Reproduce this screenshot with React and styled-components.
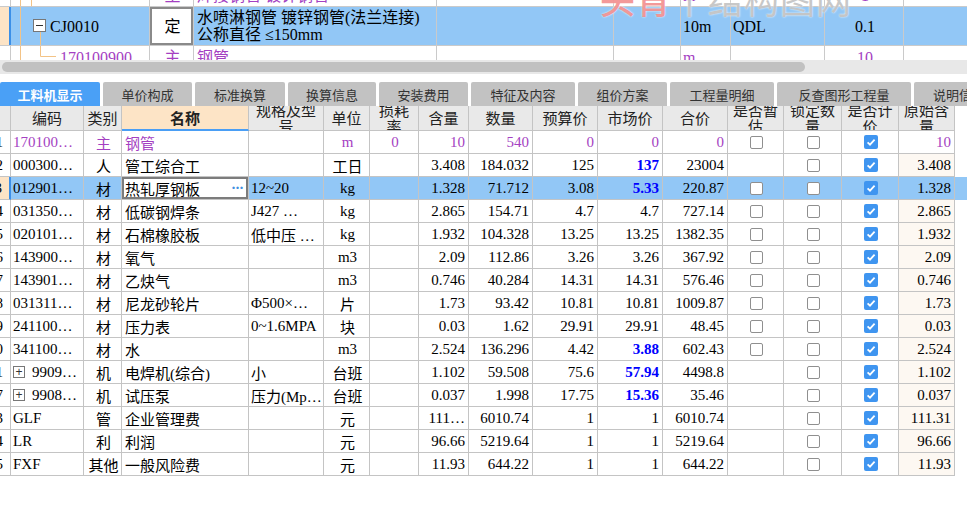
import React from "react";
import styled, { createGlobalStyle } from "styled-components";

const SONG = `"Liberation Serif", "Noto Sans CJK SC", serif`;
const HEI = `"Noto Sans CJK SC", "Liberation Sans", sans-serif`;
const PURPLE = "#a43fc2";
const SEL = "#92c7f6";
const PEACH = "#fde4c6";
const LINE = "#c4c4c4";

const GlobalStyle = createGlobalStyle`
  html, body { margin: 0; padding: 0; background: #fff; }
  #root { width: 967px; height: 512px; }
`;

const justify = (a) =>
  a === "center" ? "center" : a === "right" ? "flex-end" : "flex-start";

const Page = styled.div`
  position: relative;
  width: 967px;
  height: 512px;
  overflow: hidden;
  background: #fff;
  font-family: ${SONG};
`;

const Watermark = styled.div`
  position: absolute;
  left: 600px;
  top: -19px;
  font-family: ${HEI};
  font-size: 35px;
  line-height: 35px;
  letter-spacing: 1px;
  color: rgba(190, 190, 190, 0.85);
  text-shadow: 0 0 2px #fff;
  white-space: nowrap;
  pointer-events: none;
  & b {
    font-weight: 500;
    color: rgba(240, 120, 120, 0.75);
  }
`;

/* upper grid (quota rows) */
const UpperView = styled.div`
  height: 60px;
  overflow: hidden;
`;
const UpperTrack = styled.div`
  margin: -16px 0 0 -20px;
`;
const URow = styled.div`
  display: flex;
  height: ${(p) => p.$h}px;
  box-sizing: border-box;
  border-bottom: 1px solid #cacaca;
  background: ${(p) => (p.$sel ? SEL : "#fff")};
`;
const UCell = styled.div`
  flex: none;
  position: relative;
  box-sizing: border-box;
  width: ${(p) => p.$w}px;
  border-right: 1px solid #cacaca;
  display: flex;
  align-items: center;
  justify-content: ${(p) => justify(p.$align)};
  padding: 0 0 0 ${(p) => p.$pl ?? 2}px;
  font-size: 16px;
  line-height: 17px;
  color: ${(p) => (p.$purple ? PURPLE : "#000")};
  white-space: nowrap;
  overflow: hidden;
`;
const UNoCell = styled(UCell)`
  background: ${(p) => (p.$sel ? PEACH : "#fff")};
  border-right: ${(p) => (p.$sel ? "2px solid #3b8fe8" : "1px solid #cacaca")};
`;
const DingCell = styled(UCell)`
  background: #fff;
  box-shadow: inset 0 0 0 2px #8a8a8a;
`;
const TwoLine = styled.div`
  white-space: normal;
  line-height: 17px;
`;
const Tree = styled.svg`
  position: absolute;
  left: 0;
  top: 0;
`;

/* scrollbar + tabs */
const HScroll = styled.div`
  height: 14px;
  background: #e8e8e8;
  display: flex;
  align-items: center;
  padding: 0 2px;
`;
const Thumb = styled.div`
  width: 803px;
  height: 10px;
  border-radius: 5px;
  background: #c1c1c1;
`;
const Splitter = styled.div`
  height: 8px;
  background: #fff;
`;
const TabBar = styled.div`
  display: flex;
  gap: 3px;
  height: 24px;
  overflow: hidden;
  background: #fff;
`;
const Tab = styled.div`
  flex: none;
  width: ${(p) => p.$w}px;
  display: flex;
  align-items: center;
  justify-content: center;
  border-radius: 2px 2px 0 0;
  font-family: ${HEI};
  font-size: 13px;
  font-weight: ${(p) => (p.$active ? 700 : 400)};
  color: ${(p) => (p.$active ? "#fff" : "#333")};
  background: ${(p) => (p.$active ? "#4aa0f6" : "#c2c2c2")};
`;

/* lower grid (resources) */
const GridView = styled.div`
  overflow: hidden;
`;
const GridTrack = styled.div`
  margin-left: -20px;
`;
const HeadRow = styled.div`
  display: flex;
  height: 25px;
`;
const HeadCell = styled.div`
  flex: none;
  box-sizing: border-box;
  width: ${(p) => p.$w}px;
  height: 100%;
  border-right: 1px solid ${LINE};
  border-bottom: ${(p) => (p.$hl ? "2px solid #4a9ef5" : `1px solid ${LINE}`)};
  background: ${(p) => (p.$hl ? PEACH : "#e9e9e9")};
  display: flex;
  align-items: center;
  justify-content: center;
  text-align: center;
  padding: 0 3px;
  overflow: hidden;
  font-family: ${HEI};
  font-size: 15px;
  line-height: 16px;
  font-weight: ${(p) => (p.$hl ? 700 : 400)};
  color: #222;
`;
const BodyRow = styled.div`
  display: flex;
  height: 23px;
  background: ${(p) => (p.$sel ? SEL : "#fff")};
`;
const Cell = styled.div`
  flex: none;
  position: relative;
  box-sizing: border-box;
  width: ${(p) => p.$w}px;
  border-right: 1px solid ${LINE};
  border-bottom: 1px solid ${LINE};
  display: flex;
  align-items: center;
  justify-content: ${(p) => justify(p.$align)};
  padding: 0 ${(p) => (p.$align === "right" ? 3 : 0)}px 0 ${(p) => p.$pl ?? 2}px;
  font-size: 15px;
  white-space: nowrap;
  overflow: hidden;
  color: ${(p) => p.$color || "#000"};
  font-weight: ${(p) => (p.$bold ? 700 : 400)};
  background: ${(p) => p.$bg || "transparent"};
`;
const NoCell = styled(Cell)`
  padding-right: 7px;
  background: ${(p) => (p.$sel ? PEACH : "#fff")};
  border-right: ${(p) => (p.$sel ? "2px solid #3b8fe8" : `1px solid ${LINE}`)};
`;
const EditCell = styled(Cell)`
  background: #fff;
  justify-content: space-between;
  padding-right: 5px;
  box-shadow: inset 0 0 0 2px #7c7c7c;
`;
const Dots = styled.span`
  color: #3f8fe0;
  font-weight: 700;
  letter-spacing: -1px;
`;
const Expander = styled.span`
  flex: none;
  width: 12px;
  height: 12px;
  margin-right: 7px;
  box-sizing: border-box;
  border: 1px solid #777;
  display: flex;
  align-items: center;
  justify-content: center;
  font-family: "Liberation Sans", sans-serif;
  font-size: 12px;
  line-height: 1;
  color: #333;
`;
const Box = styled.span`
  width: 13px;
  height: 13px;
  box-sizing: border-box;
  border: 1px solid #8f8f8f;
  border-radius: 2px;
  background: #fff;
`;
const Tick = styled.svg`
  display: block;
`;

const CheckBox = ({ on }) =>
  on ? (
    <Tick width="14" height="14" viewBox="0 0 14 14">
      <rect width="14" height="14" rx="2" fill="#3f95f0" />
      <path d="M3.6 7.3 L6 9.6 L10.6 4.6" fill="none" stroke="#fff" strokeWidth="1.8" />
    </Tick>
  ) : (
    <Box />
  );

const cols = [
  { key: "no", w: 31, label: "" },
  { key: "code", w: 73, label: "编码", align: "left" },
  { key: "type", w: 38, label: "类别", align: "center" },
  { key: "name", w: 127, label: "名称", align: "left", pl: 3 },
  { key: "spec", w: 75, label: "规格及型号", align: "left" },
  { key: "unit", w: 46, label: "单位", align: "center" },
  { key: "loss", w: 49, label: "损耗率", align: "center" },
  { key: "qty", w: 50, label: "含量", align: "right" },
  { key: "amount", w: 64, label: "数量", align: "right" },
  { key: "budget", w: 65, label: "预算价", align: "right" },
  { key: "market", w: 65, label: "市场价", align: "right" },
  { key: "total", w: 65, label: "合价", align: "right" },
  { key: "est", w: 56, label: "是否暂估", check: true },
  { key: "lock", w: 58, label: "锁定数量", check: true },
  { key: "price", w: 57, label: "是否计价", check: true },
  { key: "orig", w: 56, label: "原始含量", align: "right" },
];

const rows = [
  { no: 1, code: "170100…", type: "主", name: "钢管", unit: "m", loss: "0", qty: "10", amount: "540", budget: "0", market: "0", total: "0", est: true, orig: "10", purple: true },
  { no: 2, code: "000300…", type: "人", name: "管工综合工", unit: "工日", qty: "3.408", amount: "184.032", budget: "125", market: "137", hot: true, total: "23004", orig: "3.408" },
  { no: 3, code: "012901…", type: "材", name: "热轧厚钢板", spec: "12~20", unit: "kg", qty: "1.328", amount: "71.712", budget: "3.08", market: "5.33", hot: true, total: "220.87", est: true, orig: "1.328", sel: true },
  { no: 4, code: "031350…", type: "材", name: "低碳钢焊条", spec: "J427 …", unit: "kg", qty: "2.865", amount: "154.71", budget: "4.7", market: "4.7", total: "727.14", est: true, orig: "2.865" },
  { no: 5, code: "020101…", type: "材", name: "石棉橡胶板", spec: "低中压 …", unit: "kg", qty: "1.932", amount: "104.328", budget: "13.25", market: "13.25", total: "1382.35", est: true, orig: "1.932" },
  { no: 6, code: "143900…", type: "材", name: "氧气", unit: "m3", qty: "2.09", amount: "112.86", budget: "3.26", market: "3.26", total: "367.92", est: true, orig: "2.09" },
  { no: 7, code: "143901…", type: "材", name: "乙炔气", unit: "m3", qty: "0.746", amount: "40.284", budget: "14.31", market: "14.31", total: "576.46", est: true, orig: "0.746" },
  { no: 8, code: "031311…", type: "材", name: "尼龙砂轮片", spec: "Φ500×…", unit: "片", qty: "1.73", amount: "93.42", budget: "10.81", market: "10.81", total: "1009.87", est: true, orig: "1.73" },
  { no: 9, code: "241100…", type: "材", name: "压力表", spec: "0~1.6MPA", unit: "块", qty: "0.03", amount: "1.62", budget: "29.91", market: "29.91", total: "48.45", est: true, orig: "0.03" },
  { no: 10, code: "341100…", type: "材", name: "水", unit: "m3", qty: "2.524", amount: "136.296", budget: "4.42", market: "3.88", hot: true, total: "602.43", est: true, orig: "2.524" },
  { no: 11, code: "9909…", tree: true, type: "机", name: "电焊机(综合)", spec: "小", unit: "台班", qty: "1.102", amount: "59.508", budget: "75.6", market: "57.94", hot: true, total: "4498.8", orig: "1.102" },
  { no: 17, code: "9908…", tree: true, type: "机", name: "试压泵", spec: "压力(Mp…", unit: "台班", qty: "0.037", amount: "1.998", budget: "17.75", market: "15.36", hot: true, total: "35.46", orig: "0.037" },
  { no: 13, code: "GLF", type: "管", name: "企业管理费", unit: "元", qty: "111…", amount: "6010.74", budget: "1", market: "1", total: "6010.74", orig: "111.31" },
  { no: 14, code: "LR", type: "利", name: "利润", unit: "元", qty: "96.66", amount: "5219.64", budget: "1", market: "1", total: "5219.64", orig: "96.66" },
  { no: 15, code: "FXF", type: "其他", name: "一般风险费", unit: "元", qty: "11.93", amount: "644.22", budget: "1", market: "1", total: "644.22", orig: "11.93" },
];

const tabs = [
  ["工料机显示", 100],
  ["单价构成", 89],
  ["标准换算", 90],
  ["换算信息", 88],
  ["安装费用", 89],
  ["特征及内容", 104],
  ["组价方案", 89],
  ["工程量明细", 104],
  ["反查图形工程量", 134],
  ["说明信息", 90],
];

const ORANGE = "#f3c386";

function UpperGrid() {
  return (
    <UpperView>
      <UpperTrack>
        <URow $h={23}>
          <UNoCell $w={31} />
          <UCell $w={139}>
            <Tree width="139" height="23">
              <path d="M9.5 0V23M20.5 0V23" fill="none" stroke={ORANGE} />
            </Tree>
          </UCell>
          <UCell $w={44} $align="center" $purple>主</UCell>
          <UCell $w={243} $pl={3} $purple>焊接钢管 镀锌钢管</UCell>
          <UCell $w={177} />
          <UCell $w={67} />
          <UCell $w={50} $purple>m</UCell>
          <UCell $w={94} />
          <UCell $w={79} $align="center" $purple>1</UCell>
          <UCell $w={100} />
        </URow>
        <URow $h={39} $sel>
          <UNoCell $w={31} $sel />
          <UCell $w={139} $pl={39}>
            <Tree width="139" height="39">
              <path d="M9.5 0V39M29.5 25V39" fill="none" stroke={ORANGE} />
              <rect x="22.5" y="12.5" width="12" height="12" fill="#fff" stroke="#777" />
              <path d="M25 18.5H32" fill="none" stroke="#333" />
            </Tree>
            CJ0010
          </UCell>
          <DingCell $w={44} $align="center">定</DingCell>
          <UCell $w={243} $pl={3}>
            <TwoLine>
              水喷淋钢管 镀锌钢管(法兰连接)
              <br />
              公称直径 ≤150mm
            </TwoLine>
          </UCell>
          <UCell $w={177} />
          <UCell $w={67} />
          <UCell $w={50}>10m</UCell>
          <UCell $w={94}>QDL</UCell>
          <UCell $w={79} $align="center">0.1</UCell>
          <UCell $w={100} />
        </URow>
        <URow $h={23}>
          <UNoCell $w={31} />
          <UCell $w={139} $pl={49} $purple>
            <Tree width="139" height="23">
              <path d="M9.5 0V23M29.5 0V10.5H45" fill="none" stroke={ORANGE} />
            </Tree>
            170100900
          </UCell>
          <UCell $w={44} $align="center" $purple>主</UCell>
          <UCell $w={243} $pl={3} $purple>钢管</UCell>
          <UCell $w={177} />
          <UCell $w={67} />
          <UCell $w={50} $purple>m</UCell>
          <UCell $w={94} />
          <UCell $w={79} $align="center" $purple>10</UCell>
          <UCell $w={100} />
        </URow>
      </UpperTrack>
    </UpperView>
  );
}

function ResourceRow({ r }) {
  const base = r.purple ? PURPLE : "#000";
  return (
    <BodyRow $sel={r.sel}>
      {cols.map((c) => {
        if (c.key === "no") {
          return (
            <NoCell key={c.key} $w={c.w} $align="right" $sel={r.sel}>
              {r.no}
            </NoCell>
          );
        }
        if (c.check) {
          const show = c.key !== "est" || r.est;
          return (
            <Cell key={c.key} $w={c.w} $align="center">
              {show && <CheckBox on={c.key === "price"} />}
            </Cell>
          );
        }
        if (c.key === "name" && r.sel) {
          return (
            <EditCell key={c.key} $w={c.w} $pl={c.pl}>
              {r.name}
              <Dots>···</Dots>
            </EditCell>
          );
        }
        const hot = c.key === "market" && r.hot;
        const bg = c.key === "orig" && !r.purple && !r.sel ? "#fdf8f2" : undefined;
        return (
          <Cell
            key={c.key}
            $w={c.w}
            $align={c.align}
            $pl={c.pl}
            $color={hot ? "#0000ff" : base}
            $bold={hot}
            $bg={bg}
          >
            {c.key === "code" && r.tree && <Expander>+</Expander>}
            {r[c.key]}
          </Cell>
        );
      })}
    </BodyRow>
  );
}

export default function App() {
  return (
    <Page>
      <GlobalStyle />
      <UpperGrid />
      <HScroll>
        <Thumb />
      </HScroll>
      <Splitter />
      <TabBar>
        {tabs.map(([t, w], i) => (
          <Tab key={t} $w={w} $active={i === 0}>
            {t}
          </Tab>
        ))}
      </TabBar>
      <GridView>
        <GridTrack>
          <HeadRow>
            {cols.map((c) => (
              <HeadCell key={c.key} $w={c.w} $hl={c.key === "name"}>
                <span>{c.label}</span>
              </HeadCell>
            ))}
          </HeadRow>
          {rows.map((r) => (
            <ResourceRow key={r.no + r.code} r={r} />
          ))}
        </GridTrack>
      </GridView>
      <Watermark>
        <b>头肯</b>丨结构图网
      </Watermark>
    </Page>
  );
}
